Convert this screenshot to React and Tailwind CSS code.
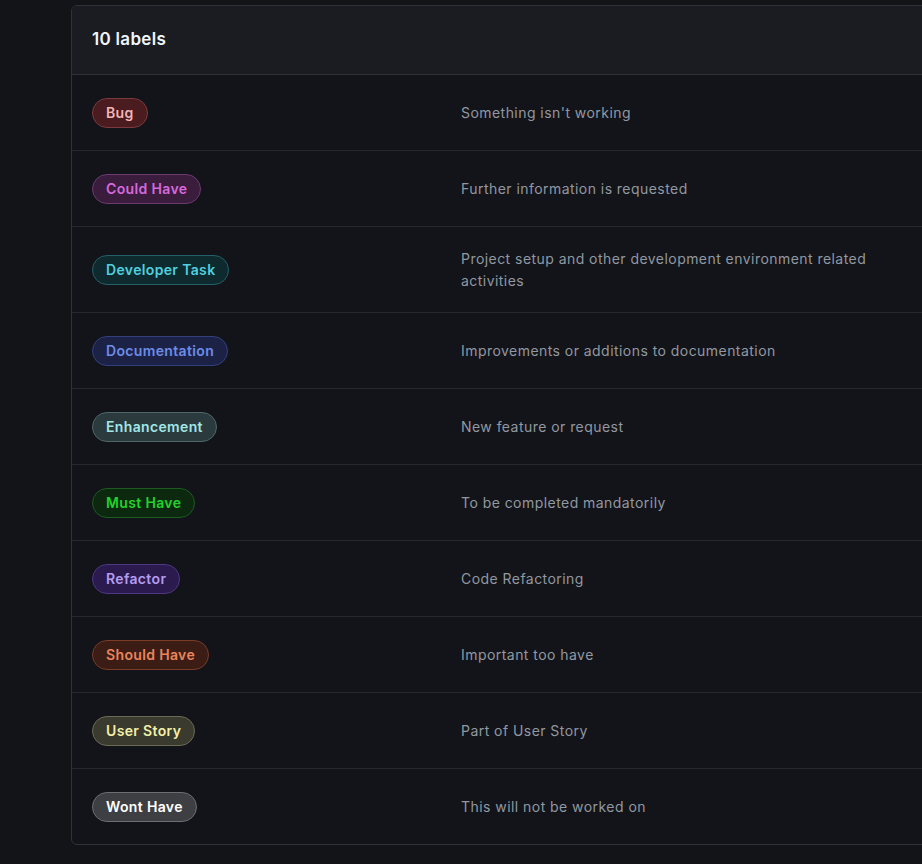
import React from "react";

const labels = [
  { name: "Bug", desc: "Something isn't working", cls: "bg-[#4a1b1f] border-[#7d3a3e] text-[#f4b4b6]" },
  { name: "Could Have", desc: "Further information is requested", cls: "bg-[#3a1c3d] border-[#6c3a6e] text-[#d569dc]" },
  { name: "Developer Task", desc: "Project setup and other development environment related activities", cls: "bg-[#0f2a2e] border-[#236068] text-[#4fd0df]" },
  { name: "Documentation", desc: "Improvements or additions to documentation", cls: "bg-[#1c2246] border-[#34407e] text-[#6d8ce6]" },
  { name: "Enhancement", desc: "New feature or request", cls: "bg-[#2b3a3d] border-[#4f6669] text-[#a2e6e6]" },
  { name: "Must Have", desc: "To be completed mandatorily", cls: "bg-[#0c2910] border-[#1c5a21] text-[#22d22b]" },
  { name: "Refactor", desc: "Code Refactoring", cls: "bg-[#2b1a4d] border-[#4e3784] text-[#b49cf0]" },
  { name: "Should Have", desc: "Important too have", cls: "bg-[#3b1d16] border-[#7a3b27] text-[#ea845c]" },
  { name: "User Story", desc: "Part of User Story", cls: "bg-[#3a3a2e] border-[#6b6b55] text-[#f3efa8]" },
  { name: "Wont Have", desc: "This will not be worked on", cls: "bg-[#3e3f43] border-[#6c6d72] text-[#ffffff]" },
];

export default function App() {
  return (
    <div
      className="w-[922px] h-[864px] overflow-hidden bg-[#131418]"
      style={{ fontFamily: "Inter, 'Noto Sans', 'Liberation Sans', sans-serif" }}
    >
      <div className="ml-[71px] mt-[5px] w-[900px] border border-[#2f323a] rounded-[6px] overflow-hidden bg-[#131419]">
        <div className="h-[69px] flex items-center pl-[20px] bg-[#1b1c21] border-b border-[#2f323a]">
          <h2 className="text-[17px] font-semibold tracking-[0.3px] text-[#f0f6fc]">10 labels</h2>
        </div>
        {labels.map((l, i) => (
          <div
            key={l.name}
            className={`flex items-center py-[20.5px] pl-[20px] ${i < labels.length - 1 ? "min-h-[76px] border-b border-[#26282e]" : "min-h-[75px]"}`}
          >
            <div className="w-[369px] shrink-0 flex">
              <span
                className={`inline-flex items-center h-[30px] px-[13px] rounded-full border text-[14px] font-semibold tracking-[0.35px] leading-none ${l.cls}`}
              >
                {l.name}
              </span>
            </div>
            <div className="w-[420px] text-[14px] leading-[22px] tracking-[0.45px] text-[#9198a1]">{l.desc}</div>
          </div>
        ))}
      </div>
    </div>
  );
}
